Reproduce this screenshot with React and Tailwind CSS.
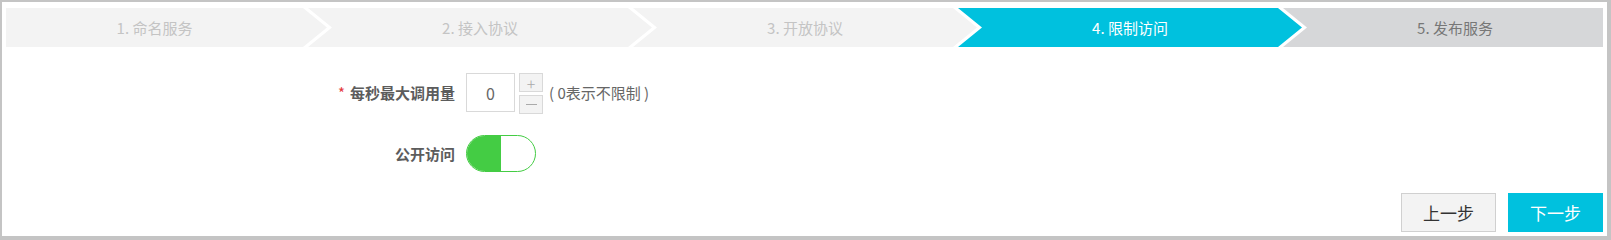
import React, { useState } from 'react';

const steps = [
  { label: '1. 命名服务', state: 'done' },
  { label: '2. 接入协议', state: 'done' },
  { label: '3. 开放协议', state: 'done' },
  { label: '4. 限制访问', state: 'active' },
  { label: '5. 发布服务', state: 'todo' },
];

const stepColors = {
  done: 'bg-[#f3f3f3] text-[#c4c4c4]',
  active: 'bg-[#00c1de] text-white',
  todo: 'bg-[#d6d7d9] text-[#777777]',
};

const Steps = () => (
  <div className="flex h-[39px]">
    {steps.map((step, i) => {
      // first one has no notch, last one has no point
      let shape = 'w-[344px] shrink-0 ml-[-19px] [clip-path:polygon(0_0,calc(100%_-_24px)_0,100%_50%,calc(100%_-_24px)_100%,0_100%,24px_50%)]';
      if (i === 0) shape = 'w-[321px] shrink-0 pr-[24px] [clip-path:polygon(0_0,calc(100%_-_24px)_0,100%_50%,calc(100%_-_24px)_100%,0_100%)]';
      if (i === steps.length - 1) shape = 'flex-1 ml-[-19px] pl-[24px] [clip-path:polygon(0_0,100%_0,100%_100%,0_100%,24px_50%)]';
      return (
        <div
          key={step.label}
          className={`${shape} ${stepColors[step.state]} flex items-center justify-center text-[15px] leading-none`}
        >
          {step.label}
        </div>
      );
    })}
  </div>
);

const App = () => {
  const [qps, setQps] = useState(0);
  const [isPublic, setIsPublic] = useState(true);

  return (
    <div className="w-[1611px] h-[240px] bg-white border-solid border-[#c4c4c4] border-t-2 border-l-2 border-r-4 border-b-4 pt-[6px] pl-[4px] pr-[4px] pb-[4px] flex flex-col font-['Noto_Sans_CJK_SC','Noto_Sans',sans-serif]">
      <Steps />

      <div className="mt-[26px] flex items-start">
        <div className="w-[449px] h-[39px] flex items-center justify-end text-[15px] font-bold text-[#5c5c5c] leading-none">
          <span className="text-[#e4393c] mr-[5px] font-normal">*</span>
          每秒最大调用量
        </div>
        <div className="ml-[11px] w-[49px] h-[39px] border border-[#d9d9d9] flex items-center justify-center text-[16px] text-[#666666] leading-none">
          {qps}
        </div>
        <div className="ml-[4px] flex flex-col gap-[3px]">
          <button
            onClick={() => setQps(qps + 1)}
            className="w-[24px] h-[19px] border border-[#d9d9d9] bg-[#f3f3f3] flex items-center justify-center text-[16px] text-[#aaaaaa] leading-none font-light"
          >
            +
          </button>
          <button
            onClick={() => setQps(Math.max(0, qps - 1))}
            className="w-[24px] h-[19px] border border-[#d9d9d9] bg-[#f3f3f3] flex items-center justify-center text-[#aaaaaa]"
          >
            <span className="block w-[11px] h-px bg-[#aaaaaa]"></span>
          </button>
        </div>
        <div className="ml-[6px] h-[39px] flex items-center text-[15px] text-[#666666] leading-none">
          ( 0表示不限制 )
        </div>
      </div>

      <div className="mt-[21px] flex items-center">
        <div className="w-[449px] text-right text-[15px] font-bold text-[#5c5c5c] leading-none">公开访问</div>
        <button
          onClick={() => setIsPublic(!isPublic)}
          className="ml-[11px] w-[70px] h-[37px] rounded-full border border-[#44cc44] overflow-hidden flex bg-white"
        >
          <span className={`block w-[34px] h-full ${isPublic ? 'bg-[#44cc44]' : 'bg-white'}`}></span>
        </button>
      </div>

      <div className="mt-auto flex justify-end gap-[12px]">
        <button className="w-[95px] h-[39px] bg-[#f3f3f3] border border-[#d0d0d0] text-[17px] text-[#333333] leading-none">
          上一步
        </button>
        <button className="w-[95px] h-[39px] bg-[#00c1de] text-[17px] text-white leading-none">
          下一步
        </button>
      </div>
    </div>
  );
};

export default App;
